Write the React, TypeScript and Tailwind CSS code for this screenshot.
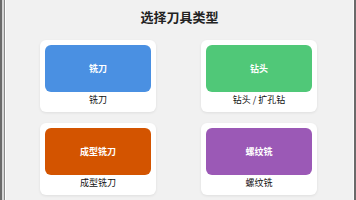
const tools = [
  { name: "铣刀", label: "铣刀", color: "bg-[#4a90e2]" },
  { name: "钻头", label: "钻头 / 扩孔钻", color: "bg-[#50c878]" },
  { name: "成型铣刀", label: "成型铣刀", color: "bg-[#d35400]" },
  { name: "螺纹铣", label: "螺纹铣", color: "bg-[#9b59b6]" },
];

export default function App() {
  return (
    <div
      className="flex h-[200px] w-[356px] overflow-hidden bg-[#f1f1f1]"
      style={{ fontFamily: '"Noto Sans CJK SC", "Noto Sans", sans-serif' }}
    >
      <div className="w-[2px] bg-[#6a6a6a]" />
      <div className="w-[2px] bg-[#d4d4d4]" />
      <div className="w-[1px] bg-[#8a8a8a]" />
      <div className="w-[1px] bg-white" />
      <div className="flex flex-1 flex-col">
        <h1 className="pt-[9px] text-center text-[13px] font-bold leading-[16px] text-[#222]">
          选择刀具类型
        </h1>
        <div className="mt-[15px] grid grid-cols-[116px_116px] justify-center gap-x-[45px] gap-y-[11px] pr-[2px]">
          {tools.map((t) => (
            <div
              key={t.name}
              className="flex flex-col rounded-md bg-white px-[5px] pt-[5px] pb-[6px] shadow-[0_1px_3px_rgba(0,0,0,0.08)]"
            >
              <div
                className={`flex h-[47px] items-center justify-center rounded-md ${t.color} text-[9px] font-bold text-white`}
              >
                {t.name}
              </div>
              <div className="mt-[2px] text-center text-[9px] leading-[12px] text-[#111]">
                {t.label}
              </div>
            </div>
          ))}
        </div>
      </div>
      <div className="w-[1px] bg-[#fafafa]" />
      <div className="w-[2px] bg-[#6a6a6a]" />
    </div>
  );
}
